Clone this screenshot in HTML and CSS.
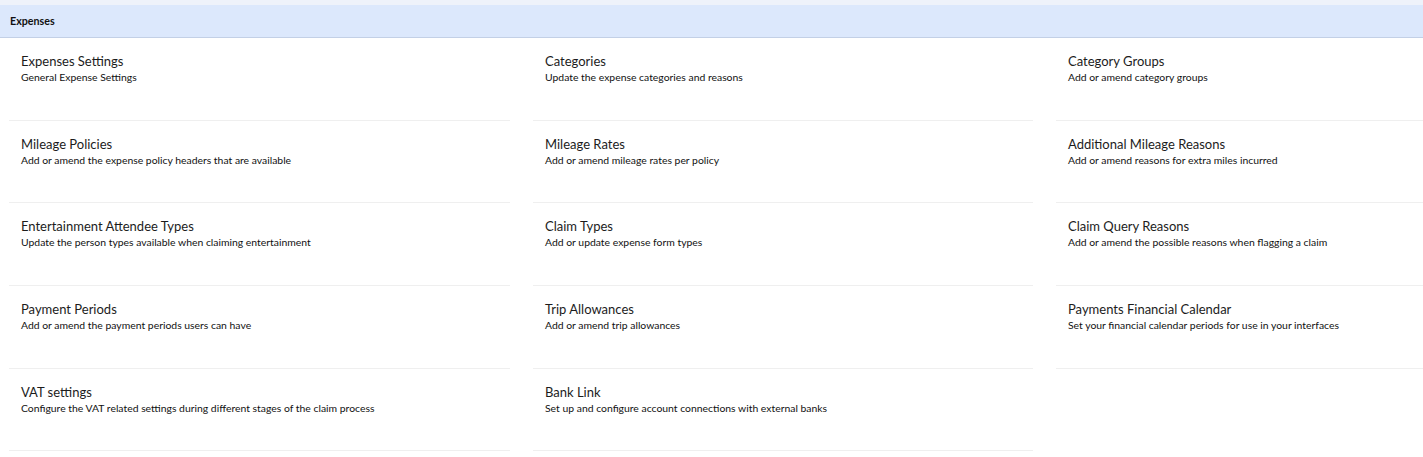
FILE: index.html
```html
<!DOCTYPE html>
<html lang="en">
<head>
<meta charset="UTF-8" />
<meta name="viewport" content="width=device-width, initial-scale=1" />
<title>Expenses - Settings</title>
<link rel="stylesheet" href="styles.css">
</head>
<body>
<div class="page">
  <div class="section-header">Expenses</div>
  <div class="tiles">
    <a class="tile" href="#">
      <div class="tile-title">Expenses Settings</div>
      <div class="tile-desc">General Expense Settings</div>
    </a>
    <a class="tile" href="#">
      <div class="tile-title">Categories</div>
      <div class="tile-desc">Update the expense categories and reasons</div>
    </a>
    <a class="tile" href="#">
      <div class="tile-title">Category Groups</div>
      <div class="tile-desc">Add or amend category groups</div>
    </a>

    <a class="tile" href="#">
      <div class="tile-title">Mileage Policies</div>
      <div class="tile-desc">Add or amend the expense policy headers that are available</div>
    </a>
    <a class="tile" href="#">
      <div class="tile-title">Mileage Rates</div>
      <div class="tile-desc">Add or amend mileage rates per policy</div>
    </a>
    <a class="tile" href="#">
      <div class="tile-title">Additional Mileage Reasons</div>
      <div class="tile-desc">Add or amend reasons for extra miles incurred</div>
    </a>

    <a class="tile" href="#">
      <div class="tile-title">Entertainment Attendee Types</div>
      <div class="tile-desc">Update the person types available when claiming entertainment</div>
    </a>
    <a class="tile" href="#">
      <div class="tile-title">Claim Types</div>
      <div class="tile-desc">Add or update expense form types</div>
    </a>
    <a class="tile" href="#">
      <div class="tile-title">Claim Query Reasons</div>
      <div class="tile-desc">Add or amend the possible reasons when flagging a claim</div>
    </a>

    <a class="tile" href="#">
      <div class="tile-title">Payment Periods</div>
      <div class="tile-desc">Add or amend the payment periods users can have</div>
    </a>
    <a class="tile" href="#">
      <div class="tile-title">Trip Allowances</div>
      <div class="tile-desc">Add or amend trip allowances</div>
    </a>
    <a class="tile" href="#">
      <div class="tile-title">Payments Financial Calendar</div>
      <div class="tile-desc">Set your financial calendar periods for use in your interfaces</div>
    </a>

    <a class="tile" href="#">
      <div class="tile-title">VAT settings</div>
      <div class="tile-desc">Configure the VAT related settings during different stages of the claim process</div>
    </a>
    <a class="tile" href="#">
      <div class="tile-title">Bank Link</div>
      <div class="tile-desc">Set up and configure account connections with external banks</div>
    </a>
  </div>
</div>
</body>
</html>
```

FILE: styles.css
```css
html, body {
  margin: 0;
  padding: 0;
  background: #fff;
  overflow: hidden;
}
body {
  font-family: Lato, 'Open Sans', sans-serif;
  color: #222;
}
.page {
  padding-top: 5px;
  background: linear-gradient(#eef2fa 0, #eef2fa 5px, #fff 5px);
}
.section-header {
  background: #dce8fc;
  border-bottom: 1px solid #c3d0e6;
  height: 32px;
  line-height: 32px;
  padding: 0 10px;
  font-size: 10.7px;
  font-weight: 700;
  color: #111;
}
.tiles {
  display: grid;
  grid-template-columns: 501px 500px 1fr;
  column-gap: 23px;
  padding-left: 9px;
}
.tile {
  display: block;
  height: 82.7px;
  border-bottom: 1px solid #efefef;
  padding: 15px 12px 0;
  box-sizing: border-box;
  text-decoration: none;
  color: inherit;
}
.tile-title {
  font-size: 13px;
  line-height: 16px;
  color: #1c1c1c;
}
.tile-desc {
  font-size: 10.4px;
  line-height: 16px;
  color: #111;
}
```
